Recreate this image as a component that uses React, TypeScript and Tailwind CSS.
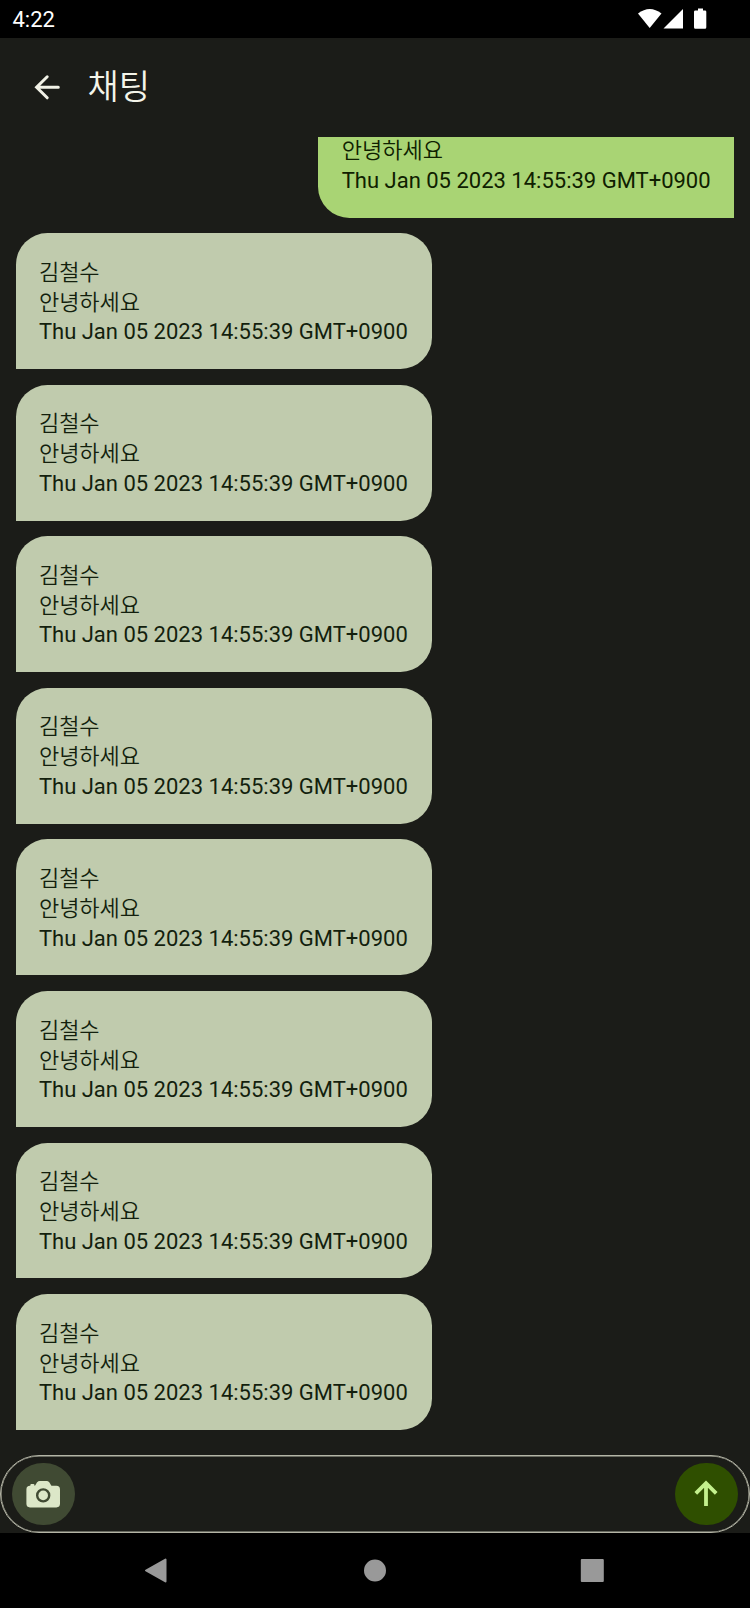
import React from "react";
import { IoCamera } from "react-icons/io5";

type Message = { name: string; text: string; date: string };

const messages: Message[] = Array.from({ length: 8 }, () => ({
  name: "김철수",
  text: "안녕하세요",
  date: "Thu Jan 05 2023 14:55:39 GMT+0900",
}));

function StatusBar() {
  return (
    <div className="flex h-[37.5px] shrink-0 items-center justify-between bg-black pr-[43px] pl-[12.5px] text-white">
      <span className="pt-[3px] text-[22px] leading-none">4:22</span>
      <svg className="h-[37px] w-[70px]" viewBox="637 0 70 37" fill="white">
        <path d="M638 13.5Q649.8 4.5 661.5 13.5L649.7 28Z" />
        <path d="M683 9V28.5H663.5Z" />
        <path d="M698 8.5h5v2h2q1.3 0 1.3 1.3v15.5q0 1.5-1.3 1.5h-9.6q-1.4 0-1.4-1.5V11.8q0-1.3 1.4-1.3H698Z" />
      </svg>
    </div>
  );
}

function Header() {
  return (
    <header className="flex h-[99.5px] shrink-0 items-center pl-7">
      <svg
        className="size-[38px]"
        viewBox="0 0 38 38"
        fill="none"
        stroke="#f1f1e6"
        strokeWidth="3"
        strokeLinecap="round"
      >
        <path d="M19.2 8.8L8.6 19.3L19.2 29.8M9 19.3H30.3" />
      </svg>
      <h1 className="ml-[21.5px] text-[34px] leading-none font-[350] text-[#f4f4e9]">채팅</h1>
    </header>
  );
}

export default function App() {
  return (
    <div className="flex h-[1608px] w-[750px] flex-col overflow-hidden bg-[#1b1c18] font-['Roboto','Noto_Sans_CJK_KR',sans-serif]">
      <StatusBar />
      <Header />
      <main className="flex min-h-0 flex-1 flex-col gap-[15.75px] px-[15.6px] text-[22px] leading-[30px] whitespace-nowrap text-[#0f2000]">
        <div className="flex h-[80.5px] w-[416px] shrink-0 flex-col justify-end self-end rounded-bl-[31.5px] bg-[#a9d474] pb-[21.5px] pl-[23.3px]">
          <p className="leading-[29px] font-[350]">
            <span className="relative -top-px">{messages[0].text}</span>
          </p>
          <p>{messages[0].date}</p>
        </div>
        {messages.map((message, i) => (
          <div
            key={i}
            className="h-[135.8px] w-[416px] shrink-0 rounded-[31.5px] rounded-bl-none bg-[#c0cbad] pt-[24.6px] pl-[23.3px] text-[#131f0d]"
          >
            <p className="font-[350]">{message.name}</p>
            <p className="leading-[29.5px] font-[350]">{message.text}</p>
            <p>{message.date}</p>
          </div>
        ))}
      </main>
      <div className="flex h-[78px] shrink-0 items-center justify-between rounded-full border border-[#b4b5a6] pr-[11.5px] pl-[11.2px] inset-shadow-[0_0_0_0.5px_#b4b5a6]">
        <button className="flex size-[62.5px] items-center justify-center rounded-full bg-[#404a33]">
          <IoCamera className="size-[38.4px] text-[#dce7c8]" />
        </button>
        <button className="flex size-[62.5px] items-center justify-center rounded-full bg-[#2f4f00]">
          <svg className="size-[38px]" viewBox="0 0 38 38" fill="none" stroke="#c4f18d" strokeWidth="3.8">
            <path d="M8.8 18.4L19 8.2L29.2 18.4M19 8.2V31" />
          </svg>
        </button>
      </div>
      <nav className="h-[75px] shrink-0 bg-black">
        <svg className="h-[75px] w-[750px]" viewBox="0 1533 750 75" fill="#999" stroke="#999" strokeLinejoin="round" strokeWidth="2">
          <path d="M146 1570.5L165.5 1559.5V1581.5Z" />
          <circle cx="375" cy="1570.5" r="10" />
          <rect x="581.8" y="1560" width="21" height="21" />
        </svg>
      </nav>
    </div>
  );
}
